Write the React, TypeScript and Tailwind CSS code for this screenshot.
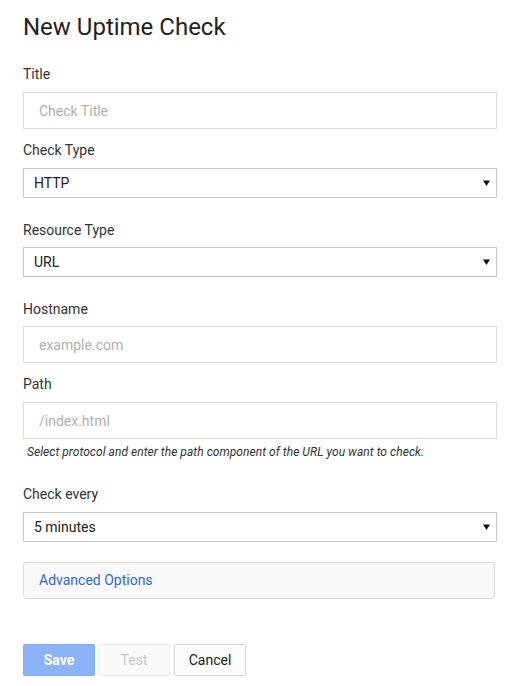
import React from "react"

function Label({ children, className = "" }: { children: React.ReactNode; className?: string }) {
  return <div className={`text-[14px] leading-[20px] text-[#333333] ${className}`}>{children}</div>
}

function TextField({ placeholder, className = "" }: { placeholder: string; className?: string }) {
  return (
    <input
      placeholder={placeholder}
      className={`block w-full h-[37px] border border-[#dcdcdc] bg-white pl-[15px] text-[14px] text-[#333] placeholder:text-[#b0b0b0] outline-none ${className}`}
    />
  )
}

function SelectBox({ value, className = "" }: { value: string; className?: string }) {
  return (
    <div
      className={`flex h-[30px] w-full items-center justify-between border border-[#c8c8c8] bg-white pl-[10px] pr-[6px] text-[14px] text-[#222] ${className}`}
    >
      <span>{value}</span>
      <svg width="7" height="6" viewBox="0 0 7 6">
        <path d="M0 0.5H7L3.5 6Z" fill="#111" />
      </svg>
    </div>
  )
}

export default function App() {
  return (
    <div className="min-h-[686px] bg-white pl-[23px] pr-[15px] font-['Roboto',sans-serif]">
      <h1 className="pt-[11px] text-[24px] leading-[32px] font-normal text-[#222]">New Uptime Check</h1>

      {/* Title */}
      <Label className="mt-[21px]">Title</Label>
      <TextField placeholder="Check Title" className="mt-[8px]" />

      {/* Check Type */}
      <Label className="mt-[11px]">Check Type</Label>
      <SelectBox value="HTTP" className="mt-[8px]" />

      {/* Resource Type */}
      <Label className="mt-[22px]">Resource Type</Label>
      <SelectBox value="URL" className="mt-[7px]" />

      {/* Hostname */}
      <Label className="mt-[22px]">Hostname</Label>
      <TextField placeholder="example.com" className="mt-[7px]" />

      {/* Path */}
      <Label className="mt-[11px]">Path</Label>
      <TextField placeholder="/index.html" className="mt-[8px]" />
      <p className="mt-[3px] pl-[4px] text-[12px] leading-[20px] italic tracking-[0.05px] text-[#333]">
        Select protocol and enter the path component of the URL you want to check.
      </p>

      {/* Check every */}
      <Label className="mt-[22px]">Check every</Label>
      <SelectBox value="5 minutes" className="mt-[8px]" />

      {/* Advanced */}
      <div className="mt-[20px] mr-[2px] flex h-[37px] items-center rounded-[3px] border border-[#dcdcdc] bg-[#f9f9f9] pl-[15px] text-[14px] text-[#3367d6]">
        Advanced Options
      </div>

      {/* Buttons */}
      <div className="mt-[45px] flex gap-[3px]">
        <button className="h-[32px] w-[72px] rounded-[2px] border border-[#7fabf5] bg-[#8cb3f7] text-[14px] font-bold text-white">
          Save
        </button>
        <button className="h-[32px] w-[72px] rounded-[2px] border border-[#ebebeb] bg-[#fafafa] text-[14px] text-[#c8c8c8]">
          Test
        </button>
        <button className="ml-[1px] h-[32px] w-[72px] rounded-[2px] border border-[#d6d6d6] bg-[#fcfcfc] text-[14px] text-[#222]">
          Cancel
        </button>
      </div>
    </div>
  )
}
